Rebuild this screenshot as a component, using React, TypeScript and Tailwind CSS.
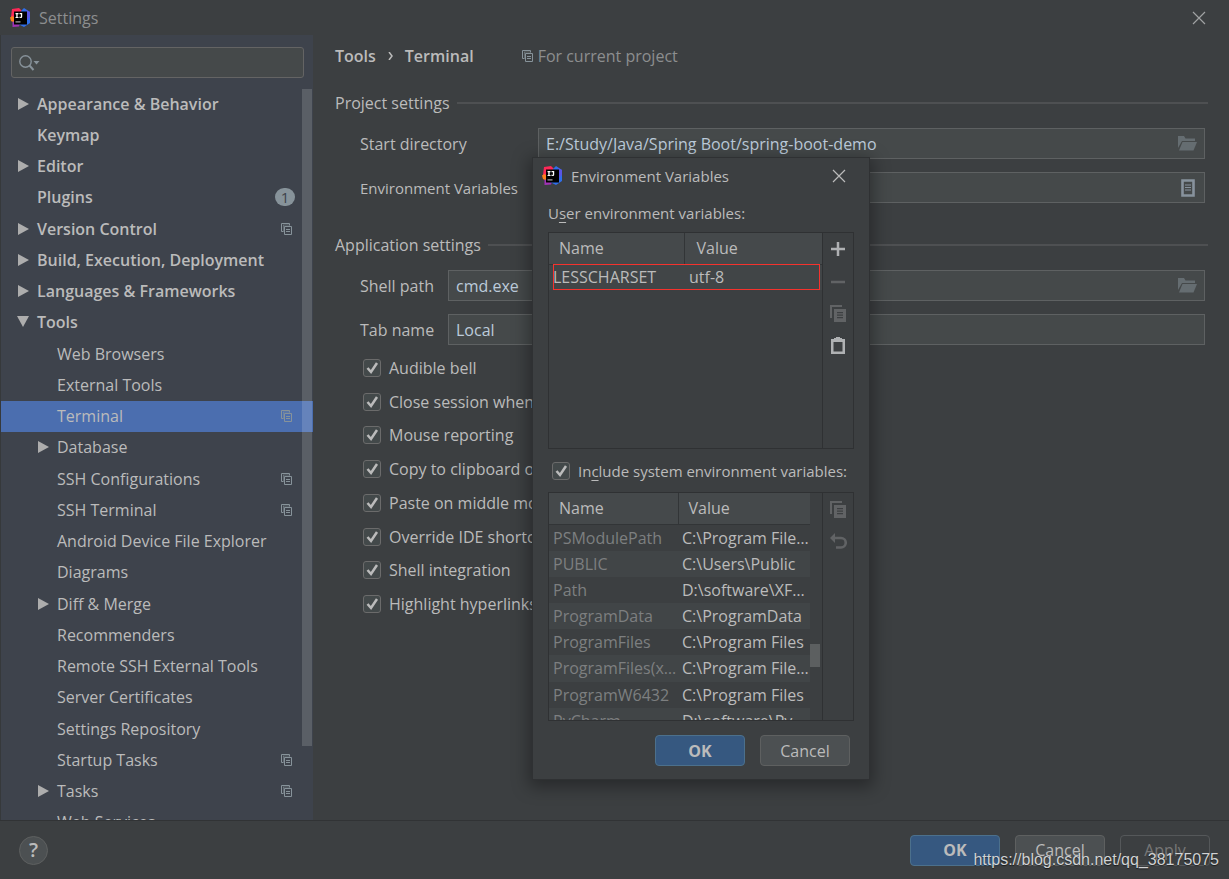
import { useState } from "react";

type TreeItem = {
  label: string;
  level: 0 | 1;
  arrow?: "right" | "down";
  copy?: boolean;
  badge?: number;
  selected?: boolean;
};

const tree: TreeItem[] = [
  { label: "Appearance & Behavior", level: 0, arrow: "right" },
  { label: "Keymap", level: 0 },
  { label: "Editor", level: 0, arrow: "right" },
  { label: "Plugins", level: 0, badge: 1 },
  { label: "Version Control", level: 0, arrow: "right", copy: true },
  { label: "Build, Execution, Deployment", level: 0, arrow: "right" },
  { label: "Languages & Frameworks", level: 0, arrow: "right" },
  { label: "Tools", level: 0, arrow: "down" },
  { label: "Web Browsers", level: 1 },
  { label: "External Tools", level: 1 },
  { label: "Terminal", level: 1, copy: true, selected: true },
  { label: "Database", level: 1, arrow: "right" },
  { label: "SSH Configurations", level: 1, copy: true },
  { label: "SSH Terminal", level: 1, copy: true },
  { label: "Android Device File Explorer", level: 1 },
  { label: "Diagrams", level: 1 },
  { label: "Diff & Merge", level: 1, arrow: "right" },
  { label: "Recommenders", level: 1 },
  { label: "Remote SSH External Tools", level: 1 },
  { label: "Server Certificates", level: 1 },
  { label: "Settings Repository", level: 1 },
  { label: "Startup Tasks", level: 1, copy: true },
  { label: "Tasks", level: 1, arrow: "right", copy: true },
  { label: "Web Services", level: 1 },
];

const options = [
  "Audible bell",
  "Close session when it ends",
  "Mouse reporting",
  "Copy to clipboard on selection",
  "Paste on middle mouse button click",
  "Override IDE shortcuts",
  "Shell integration",
  "Highlight hyperlinks",
];

const systemVars = [
  ["PSModulePath", "C:\\Program Files\\WindowsPowerShell"],
  ["PUBLIC", "C:\\Users\\Public"],
  ["Path", "D:\\software\\XFtp\\bin"],
  ["ProgramData", "C:\\ProgramData"],
  ["ProgramFiles", "C:\\Program Files"],
  ["ProgramFiles(x86)", "C:\\Program Files (x86)"],
  ["ProgramW6432", "C:\\Program Files"],
  ["PyCharm", "D:\\software\\PyCharm"],
];

const Logo = () => (
  <svg width="20" height="20" viewBox="0 0 20 20" className="shrink-0">
    <path d="M2 1 9 0l4 4-8 10L1 9z" fill="#fe2857" />
    <path d="M0 9.500 2.500 8 5 10v5l-4-2z" fill="#fc801d" />
    <path d="M2.500 14 5 13h6l-2 5.500-6.500.5z" fill="#a033b5" />
    <path d="m11 3 3-3 6 4v11l-6 4-6-3z" fill="#2f6fea" />
    <path d="m16 2 4 2v5l-3 3z" fill="#5a55e4" />
    <path d="M4 3.500h13v13H4z" fill="#000" />
    <path d="M5.500 5h3v1.200h-.9v2.700h.9v1.200h-3V8.900h.8V6.200h-.8zM9.500 5h2.700v3.400c0 1.100-.6 1.700-1.500 1.700-.8 0-1.300-.3-1.600-.8l.8-.8c.2.3.4.4.6.4.3 0 .4-.2.4-.6V6.200H9.500z" fill="#fff" />
    <path d="M5.500 13.300h5v1.200h-5z" fill="#aaa" />
  </svg>
);

const Close = ({ className }: { className: string }) => (
  <svg width="14" height="14" viewBox="0 0 14 14" className={className} fill="none" stroke="currentColor">
    <path d="m1 1 12 12M13 1 1 13" strokeWidth="1.200" />
  </svg>
);

const ProjectIcon = () => (
  <svg width="11" height="12" viewBox="0 0 11 12" className="shrink-0 text-[#87939a]" fill="none" stroke="currentColor">
    <path d="M2.500 8.500h-2v-8h8v2" />
    <path d="M2 2h6.500M2.500 2v6.500" opacity="0.5" />
    <path d="M3.500 3.500h7v8h-7z" />
    <path d="M5 6.500h4M5 8.500h4" />
  </svg>
);

const CopyIcon = () => (
  <svg width="16" height="17" viewBox="0 0 16 17" fill="#616365">
    <path d="M0 0h12v2H2v11H0z" />
    <path d="M4 4h12v13H4zm3 3v1.200h6V7zm0 2.500v1.200h6V9.500zM7 12v1.200h6V12z" fillRule="evenodd" />
  </svg>
);

const Folder = () => (
  <svg width="19" height="15" viewBox="0 0 19 15" fill="#656d71">
    <path d="M0 12V0h6l1.500 2.500H17V5H4z" />
    <path d="M4.500 6H19l-3.500 8.500H1z" />
  </svg>
);

const ListIcon = () => (
  <svg width="16" height="18" viewBox="0 0 16 18" fill="none" stroke="#87929d">
    <path d="M1.500 1.500h11v15h-11z" strokeWidth="2.600" />
    <path d="M4 6h6M4 8.500h6M4 11h6" strokeWidth="1.200" />
  </svg>
);

const Arrow = ({ dir }: { dir: "right" | "down" }) => (
  <svg width="12" height="12" viewBox="0 0 12 12" fill="#adadad">
    <path d={dir === "right" ? "M1 0v12l11-6z" : "M0 0h12L6 11z"} />
  </svg>
);

const Check = ({ id }: { id: string }) => (
  <span className="grid shrink-0">
    <input
      id={id}
      type="checkbox"
      defaultChecked
      className="peer col-start-1 row-start-1 size-[18px] appearance-none rounded-[3px] border border-[#6b6b6b] bg-[#43494a]"
    />
    <svg viewBox="0 0 18 18" fill="none" className="pointer-events-none invisible col-start-1 row-start-1 size-[18px] peer-checked:visible">
      <path d="m4.500 9 3.500 4 6-9" stroke="#bbb" strokeWidth="2.500" />
    </svg>
  </span>
);

const Heading = ({ children }: { children: string }) => (
  <div className="flex h-6 items-center gap-[7px]">
    <h2>{children}</h2>
    <span className="h-0.5 flex-1 bg-[#4e5052]" />
  </div>
);

type FieldProps = { id: string; label: string; labelClass: string; value: string; icon?: React.ReactNode };

const Field = ({ id, label, labelClass, value, icon }: FieldProps) => (
  <div className="flex h-[31px] items-center pr-[3px] pl-[25px]">
    <label htmlFor={id} className={labelClass}>{label}</label>
    <div className="flex h-full flex-1 items-center border border-[#5e6162] bg-[#45494a] pr-[7px] pl-[7px]">
      <input id={id} defaultValue={value} className="min-w-0 flex-1 bg-transparent text-[#bccbda] outline-none" />
      {icon}
    </div>
  </div>
);

const btn = "h-[31px] w-[90px] rounded border";

const EnvDialog = () => (
  <div
    role="dialog"
    aria-label="Environment Variables"
    className="absolute top-[158px] left-[533px] flex h-[621px] w-[336px] flex-col bg-[#3c3f41] shadow-[0_0_0_1px_#2f3133,0_4px_16px_4px_rgba(0,0,0,0.35)]"
  >
    <div className="flex h-9 items-center pr-[23px] pl-[9px]">
      <Logo />
      <span className="ml-[9px] flex-1 text-[15px]">Environment Variables</span>
      <button aria-label="Close"><Close className="text-[#bbb]" /></button>
    </div>
    <p className="flex h-[38px] items-center pl-[15px] text-[15px]">
      <span>U<u className="underline-offset-3">s</u>er environment variables:</span>
    </p>

    <div className="mr-[15px] ml-[15px] flex h-[217px] border border-[#2f3133]">
      <div className="relative flex-1">
        <table className="w-full table-fixed text-left">
          <thead className="h-[31px] border-b border-[#323537] bg-[#45494b]">
            <tr>
              <th className="w-[135px] border-r border-[#323537] pl-[10px] font-normal">Name</th>
              <th className="pl-3 font-normal">Value</th>
            </tr>
          </thead>
          <tbody>
            <tr className="h-[26px] bg-[#414547]">
              <td className="pl-1">LESSCHARSET</td>
              <td className="pl-[5px]">utf-8</td>
            </tr>
          </tbody>
        </table>
        <span className="absolute top-[31px] right-[2px] left-1 h-[26px] border border-[#f5322d]" />
      </div>
      <div className="flex w-[31px] flex-col items-center border-l border-[#2f3133]">
        <button aria-label="Add" className="grid h-8 place-items-center">
          <svg width="14" height="14" viewBox="0 0 14 14" stroke="#afb1b3" strokeWidth="2.500"><path d="M7 0v14M0 7h14" /></svg>
        </button>
        <button aria-label="Remove" disabled className="grid h-8 place-items-center">
          <svg width="14" height="14" viewBox="0 0 14 14" stroke="#616365" strokeWidth="2.500"><path d="M0 8h14" /></svg>
        </button>
        <button aria-label="Copy" disabled className="grid h-8 place-items-center"><CopyIcon /></button>
        <button aria-label="Paste" className="grid h-8 place-items-center">
          <svg width="14" height="17" viewBox="0 0 14 17" fill="#afb1b3">
            <path d="M0 2h14v15H0zm2.500 3v9.500h9V5z" fillRule="evenodd" />
            <path d="M5 0h4v1h2v4H3V1h2z" />
          </svg>
        </button>
      </div>
    </div>

    <div className="flex h-[43px] items-center gap-2 pl-[19px]">
      <Check id="include-system" />
      <label htmlFor="include-system" className="text-[15px] whitespace-nowrap">
        In<u className="underline-offset-3">c</u>lude system environment variables:
      </label>
    </div>

    <div className="mr-[15px] ml-[15px] flex h-[229px] border border-[#2f3133]">
      <div className="flex-1 overflow-hidden pr-3">
        <table className="h-[241px] w-full table-fixed text-left">
          <thead className="h-[31px] border-b border-[#323537] bg-[#45494b]">
            <tr>
              <th className="w-[129px] border-r border-[#323537] pl-[10px] font-normal">Name</th>
              <th className="pl-[10px] font-normal">Value</th>
            </tr>
          </thead>
          <tbody>
            {systemVars.map(([name, value]) => (
              <tr key={name} className="even:bg-[#414547]">
                <td className="truncate pl-1 text-[#7d7f80]">{name}</td>
                <td className="truncate pl-1">{value}</td>
              </tr>
            ))}
          </tbody>
        </table>
      </div>
      <div className="relative flex w-[31px] flex-col items-center border-l border-[#2f3133]">
        <span className="absolute top-[151px] -left-[13px] h-[23px] w-[10px] bg-[#5c5f60]" />
        <button aria-label="Copy" disabled className="grid h-8 place-items-center"><CopyIcon /></button>
        <button aria-label="Revert" disabled className="grid h-8 place-items-center">
          <svg width="17" height="16" viewBox="0 0 17 16" fill="none" stroke="#616365">
            <path d="M4 5h7a4.500 4.500 0 0 1 0 9.500H6" strokeWidth="2.600" />
            <path d="M5 0v10L0 5z" fill="#616365" stroke="none" />
          </svg>
        </button>
      </div>
    </div>

    <div className="mt-[14px] flex justify-end gap-[15px] pr-[19px]">
      <button className={`${btn} border-[#4c708c] bg-[#365880] font-bold`}>OK</button>
      <button className={`${btn} border-[#5e6060] bg-[#4c5052]`}>Cancel</button>
    </div>
  </div>
);

export default function App() {
  const [query, setQuery] = useState("");

  return (
    <div className="relative flex h-screen flex-col overflow-hidden bg-[#3c3f41] font-['Open_Sans',sans-serif] text-base leading-6 text-[#bbbbbb]">
      <header className="flex h-[35px] shrink-0 items-center pr-[23px] pl-[10px]">
        <Logo />
        <h1 className="ml-[9px] flex-1 text-[#8c8e8f]">Settings</h1>
        <button aria-label="Close"><Close className="text-[#a0a2a3]" /></button>
      </header>

      <div className="flex min-h-0 flex-1">
        {/* Settings tree */}
        <aside className="relative flex w-[313px] shrink-0 flex-col overflow-hidden border-l border-[#36393b] bg-[#3e434c]">
          <div className="mt-3 mr-[9px] mb-[10px] ml-[10px] flex h-[31px] shrink-0 items-center rounded-[3px] border border-[#646464] bg-[#45494a] pl-[7px]">
            <svg width="22" height="16" viewBox="0 0 22 16" fill="none" stroke="#87929a">
              <circle cx="6.500" cy="6.500" r="5.700" strokeWidth="1.400" />
              <path d="m10.500 10.500 4 4.500" strokeWidth="2" />
              <path d="M14.500 6h6l-3 3.500z" fill="#87929a" stroke="none" />
            </svg>
            <input
              aria-label="Search settings"
              value={query}
              onChange={(e) => setQuery(e.target.value)}
              className="min-w-0 flex-1 bg-transparent pl-1 outline-none"
            />
          </div>
          <ul className="flex h-[750px] shrink-0 flex-col">
            {tree.map((item) => (
              <li
                key={item.label}
                className={`flex flex-1 items-center pr-[21px] ${item.level === 0 ? "pl-4 font-semibold" : "pl-9"} ${item.selected ? "bg-[#4b6eaf]" : ""}`}
              >
                <span className="w-5">{item.arrow && <Arrow dir={item.arrow} />}</span>
                <span className="flex-1 whitespace-nowrap">{item.label}</span>
                {item.copy && <ProjectIcon />}
                {item.badge && (
                  <span className="-mr-[3px] h-[18px] w-5 rounded-full bg-[#87939a] text-center text-[15px] leading-[18px] font-normal text-[#3e434c]">
                    {item.badge}
                  </span>
                )}
              </li>
            ))}
          </ul>
          <span className="absolute top-[54px] right-px h-[657px] w-[10px] bg-white/15" />
        </aside>

        {/* Terminal page */}
        <main className="flex-1 pr-[21px] pl-[22px]">
          <div className="flex h-[41px] items-center">
            <span className="font-semibold">Tools</span>
            <svg width="5" height="8" viewBox="0 0 5 8" fill="none" stroke="#bbb" strokeWidth="1.500" className="mx-3">
              <path d="m1 0 3 4-3 4" />
            </svg>
            <span className="font-semibold">Terminal</span>
            <span className="ml-12 flex items-center gap-[5px] text-[#8c8e8f]">
              <ProjectIcon />
              For current project
            </span>
          </div>

          <section className="mt-[15px] flex flex-col gap-[13px]">
            <Heading>Project settings</Heading>
            <Field id="start-dir" label="Start directory" labelClass="w-[178px]" value="E:/Study/Java/Spring Boot/spring-boot-demo" icon={<Folder />} />
            <Field id="env-vars" label="Environment Variables" labelClass="w-[178px] text-[15px]" value="" icon={<ListIcon />} />
          </section>

          <section className="mt-[30px] flex flex-col gap-[13px]">
            <Heading>Application settings</Heading>
            <Field id="shell-path" label="Shell path" labelClass="w-[88px]" value="cmd.exe" icon={<Folder />} />
            <Field id="tab-name" label="Tab name" labelClass="w-[88px]" value="Local" />
          </section>

          <div className="mt-[6px] flex h-[270px] flex-col pl-7">
            {options.map((option, i) => (
              <div key={option} className="flex flex-1 items-center gap-2">
                <Check id={`option-${i}`} />
                <label htmlFor={`option-${i}`}>{option}</label>
              </div>
            ))}
          </div>
        </main>
      </div>

      <footer className="flex h-[59px] shrink-0 items-center gap-[15px] border-t border-[#313335] bg-[#3c3f41] pr-[19px] pl-[19px]">
        <button aria-label="Help" className="mr-auto size-[29px] rounded-full border border-[#5e6060] bg-[#4c5052] text-xl leading-none font-semibold">
          ?
        </button>
        <button className={`${btn} border-[#4c708c] bg-[#365880] font-bold`}>OK</button>
        <button className={`${btn} border-[#5e6060] bg-[#4c5052]`}>Cancel</button>
        <button disabled className={`${btn} border-[#55585a] text-[#777777]`}>Apply</button>
      </footer>

      <EnvDialog />

      <span className="absolute right-[10px] bottom-[7px] font-['Liberation_Sans',sans-serif] text-base leading-6 text-[#d0d2d3] [text-shadow:0_1px_1px_rgba(0,0,0,0.6)]">
        https://blog.csdn.net/qq_38175075
      </span>
    </div>
  );
}
